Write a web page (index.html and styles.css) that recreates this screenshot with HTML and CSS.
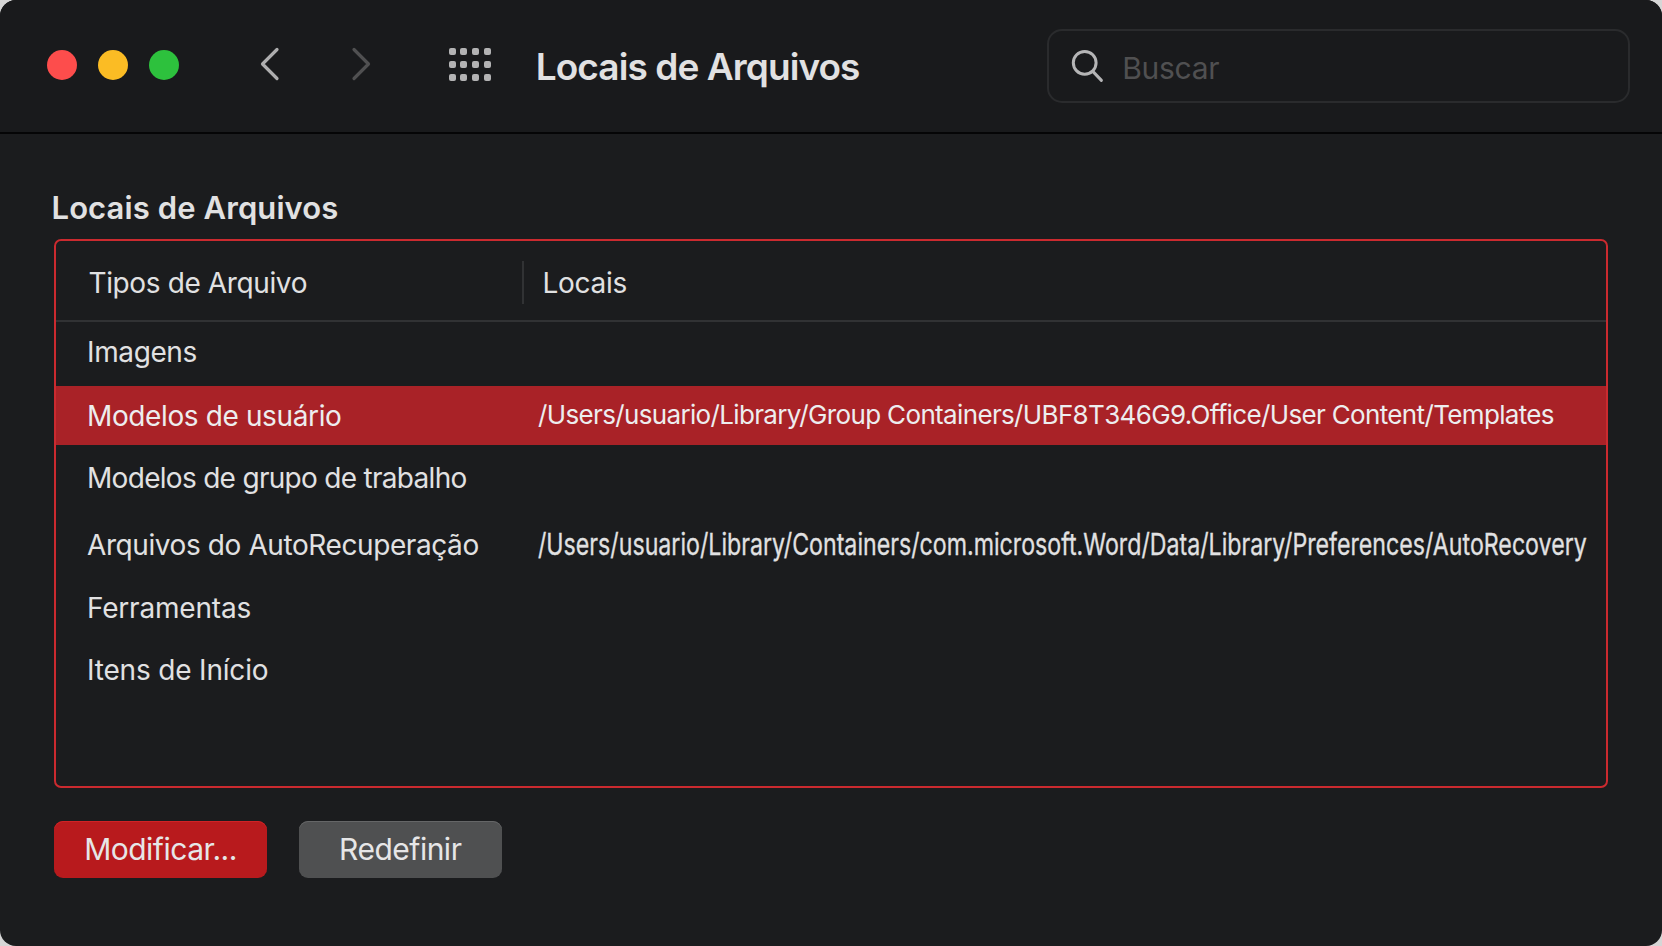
FILE: index.html
```
<!DOCTYPE html>
<html lang="pt-BR">
<head>
<meta charset="utf-8">
<title>Locais de Arquivos</title>
<link rel="stylesheet" href="styles.css">
</head>
<body>
<main class="window">
  <header class="toolbar">
    <div class="lights">
      <span class="light light-close"></span>
      <span class="light light-minimize"></span>
      <span class="light light-zoom"></span>
    </div>
    <nav class="nav">
      <svg class="chevron" width="20" height="36" viewBox="0 0 20 36"><path d="M17 3.5 2.5 18 17 32.5"/></svg>
      <svg class="chevron chevron-off" width="20" height="36" viewBox="0 0 20 36"><path d="M3 3.5 17.5 18 3 32.5"/></svg>
    </nav>
    <div class="dots">
      <i></i><i></i><i></i><i></i>
      <i></i><i></i><i></i><i></i>
      <i></i><i></i><i></i><i></i>
    </div>
    <h1 class="title">Locais de Arquivos</h1>
    <div class="search">
      <svg class="glass" width="34" height="34" viewBox="0 0 34 34"><circle cx="13.7" cy="13.8" r="11.4"/><path d="M21.8 22.4 30.4 31.4"/></svg>
      <span class="placeholder">Buscar</span>
    </div>
  </header>
  <section class="content">
    <h2 class="heading">Locais de Arquivos</h2>
    <div class="table">
      <div class="head">
        <span class="head-type">Tipos de Arquivo</span>
        <span class="head-place">Locais</span>
      </div>
      <div class="row row-images"><span class="type">Imagens</span></div>
      <div class="row row-user"><span class="type">Modelos de usuário</span><span class="path">/Users/usuario/Library/Group Containers/UBF8T346G9.Office/User Content/Templates</span></div>
      <div class="row row-group"><span class="type">Modelos de grupo de trabalho</span></div>
      <div class="row row-recovery"><span class="type">Arquivos do AutoRecuperação</span><span class="path path-narrow">/Users/usuario/Library/Containers/com.microsoft.Word/Data/Library/Preferences/AutoRecovery</span></div>
      <div class="row row-tools"><span class="type">Ferramentas</span></div>
      <div class="row row-startup"><span class="type">Itens de Início</span></div>
    </div>
    <div class="actions">
      <button class="button button-primary">Modificar...</button>
      <button class="button button-plain">Redefinir</button>
    </div>
  </section>
</main>
</body>
</html>
```
FILE: styles.css
```
* { box-sizing: border-box; }

body {
  margin: 0;
  background: #d6d6d6;
  color: #e1e1e2;
  font-family: Inter, "Liberation Sans", sans-serif;
}

.window {
  width: 1662px;
  height: 946px;
  overflow: hidden;
  border-radius: 16px;
  background: #1b1c1e;
}

.toolbar {
  display: flex;
  align-items: flex-start;
  height: 134px;
  padding-left: 47px;
  border-bottom: 2px solid #050506;
  background: #191a1c;
}

.lights { display: flex; gap: 20.8px; padding-top: 50px; }
.light { width: 30px; height: 30px; border-radius: 50%; }
.light-close { background: #fd4d4c; }
.light-minimize { background: #fbbc24; }
.light-zoom { background: #2dc13d; }

.nav { display: flex; gap: 71px; margin: 46px 0 0 81.6px; }
.chevron {
  display: block;
  fill: none;
  stroke: #aeaeaf;
  stroke-width: 3.2;
  stroke-linecap: round;
  stroke-linejoin: round;
}
.chevron-off { stroke: #505051; }

.dots {
  display: grid;
  grid-template-columns: repeat(4, 7px);
  gap: 6px 4.7px;
  margin: 47.5px 0 0 77.5px;
}
.dots i { width: 7px; height: 7px; border-radius: 2px; background: #b3b3b4; }

.title {
  width: 511.5px;
  margin: 43.5px 0 0 45px;
  font-size: 37px;
  font-weight: 600;
  line-height: 45px;
  letter-spacing: -0.92px;
  white-space: nowrap;
}

.search {
  display: flex;
  width: 583px;
  height: 74px;
  margin-top: 28.5px;
  padding-left: 21.5px;
  border: 2px solid #2a2b2d;
  border-radius: 15px;
}
.glass {
  margin-top: 18px;
  fill: none;
  stroke: #b5b5b6;
  stroke-width: 3;
  stroke-linecap: round;
}
.placeholder {
  margin: 19px 0 0 17.5px;
  color: #505051;
  font-size: 30px;
  line-height: 36px;
  letter-spacing: -0.3px;
}

.content { padding: 54px 54px 0; }

.heading {
  margin: 0 0 11px -2.5px;
  font-size: 31px;
  font-weight: 600;
  line-height: 40px;
  letter-spacing: 0.1px;
}

.table {
  height: 549px;
  border: 2px solid #cb2a2f;
  border-radius: 7px;
  font-size: 28px;
  letter-spacing: -0.38px;
  line-height: 34px;
  white-space: nowrap;
}

.head {
  display: grid;
  grid-template-columns: 466px 1fr;
  align-items: center;
  height: 81px;
  padding-top: 4px;
  border-bottom: 2px solid #313234;
}
.head-type { padding-left: 32.5px; }
.head-place {
  height: 43px;
  padding: 2px 0 0 18.5px;
  border-left: 2px solid #313234;
  line-height: 40px;
  letter-spacing: -0.3px;
}

.row {
  display: grid;
  grid-template-columns: 451px 1fr;
  align-items: center;
  padding-left: 31px;
}
.row-images { height: 64px; padding-bottom: 4px; }
.row-user { height: 59px; background: #a92227; color: #ededee; }
.row-group { height: 66px; letter-spacing: -0.7px; }
.row-recovery { height: 68px; letter-spacing: -0.41px; }
.row-tools { height: 58px; letter-spacing: -0.2px; }
.row-startup { height: 65px; letter-spacing: -0.18px; }

.path { font-size: 26px; letter-spacing: -0.65px; }
.row-user .path { padding-bottom: 2px; }
.path-narrow {
  width: 1360px;
  padding-bottom: 2px;
  font-size: 30px;
  letter-spacing: 0;
  -webkit-text-stroke: 0.3px;
  transform: scaleX(0.7728);
  transform-origin: left center;
}

.actions { display: flex; gap: 31.5px; padding-top: 33px; }
.button {
  height: 56.5px;
  padding: 0 0 1px;
  border: 0;
  border-radius: 9px;
  color: #e6e6e7;
  font: 400 30px/36px Inter, "Liberation Sans", sans-serif;
  letter-spacing: -0.5px;
}
.button-primary { width: 213px; background: #b81a1d; box-shadow: inset 0 1px #d02326; }
.button-plain { width: 203.5px; background: #4f5051; box-shadow: inset 0 1px #656667; }
```
